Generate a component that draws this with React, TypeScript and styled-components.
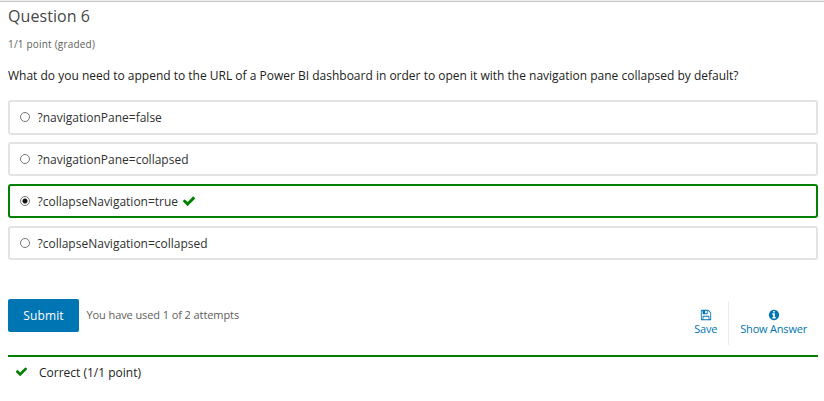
import React from 'react';
import styled, { createGlobalStyle } from 'styled-components';

const GlobalStyle = createGlobalStyle`
  * { box-sizing: border-box; }
  body {
    margin: 0;
    background: #fff;
    color: #222;
    font-family: "Open Sans", sans-serif;
    font-size: 12px;
  }
`;

const Problem = styled.main`
  height: 401px;
  padding: 0 6px 0 8px;
  border-top: 1px solid #ececec;
  box-shadow: inset 0 1px 0 #c8c8c8;
  overflow: hidden;
`;

const Title = styled.h3`
  margin: 0;
  padding-top: 5px;
  font-size: 16px;
  line-height: 20px;
  font-weight: 400;
  letter-spacing: 0.07px;
  color: #474747;
`;

const Progress = styled.div`
  margin-top: 11px;
  font-size: 10px;
  line-height: 14px;
  letter-spacing: 0.2px;
  color: #5e5e5e;
`;

const Prompt = styled.p`
  margin: 16px 0 15px;
  font-size: 12px;
  line-height: 18px;
  white-space: nowrap;
`;

const Choices = styled.div`
  display: flex;
  flex-direction: column;
`;

const Choice = styled.label<{ $correct?: boolean }>`
  display: flex;
  align-items: center;
  height: 34px;
  margin-bottom: 8px;
  padding-left: 10px;
  border: 2px solid ${(p) => (p.$correct ? '#008100' : '#e3e3e3')};
  border-radius: 3px;
  color: #313131;
  line-height: 18px;
  white-space: nowrap;
  &:first-child {
    height: 35px;
    margin-bottom: 7px;
    padding-bottom: 1px;
  }
`;

const ChoiceText = styled.span`
  padding-top: 2px;
`;

const Radio = styled.input`
  appearance: none;
  width: 10px;
  height: 10px;
  margin: 0 7.5px 0 0;
  border: 1px solid #777;
  border-radius: 50%;
  background: #fff;
  &:checked {
    background: radial-gradient(circle, #111 0 2px, #fff 3px);
  }
`;

const Icon = styled.svg<{ $size: number }>`
  display: block;
  flex: none;
  width: ${(p) => p.$size}px;
  height: ${(p) => p.$size}px;
  fill: currentColor;
`;

const Mark = styled.span`
  margin-left: 4px;
  color: #008100;
`;

const Actions = styled.div`
  display: flex;
  align-items: flex-start;
  height: 56px;
  margin-top: 31px;
`;

const Submit = styled.button`
  width: 71px;
  height: 33px;
  padding: 0;
  border: 0;
  border-radius: 2px;
  background: #0075b4;
  color: #fff;
  font: 400 12px/33px "Open Sans", sans-serif;
  letter-spacing: 0.1px;
`;

const Attempts = styled.span`
  margin-left: 7.5px;
  font-size: 11px;
  line-height: 32px;
  letter-spacing: -0.09px;
  color: #5e5e5e;
`;

const Tools = styled.div`
  display: flex;
  margin: 3px 0 0 auto;
`;

const Tool = styled.button`
  display: flex;
  flex-direction: column;
  align-items: center;
  height: 43px;
  padding: 7px 11px 0;
  border: 0;
  background: transparent;
  color: #0075b4;
  font: 400 11px/14px "Open Sans", sans-serif;
  letter-spacing: -0.2px;
  & + & { border-left: 1px solid #ececec; }
`;

const ToolLabel = styled.span`
  margin-top: 1px;
`;

const Result = styled.div`
  display: flex;
  align-items: center;
  height: 32px;
  padding-left: 7px;
  border-top: 2px solid #008100;
`;

const ResultIcon = styled.span`
  margin: 0 11px 2px 0;
  color: #008100;
`;

const CHECK =
  'M1671 566q0 40-28 68l-724 724-136 136q-28 28-68 28t-68-28l-136-136-362-362q-28-28-28-68t28-68l136-136q28-28 68-28t68 28l294 295 656-657q28-28 68-28t68 28l136 136q28 28 28 68z';
const FLOPPY =
  'M512 1536h768v-384h-768v384zm896 0h128v-896q0-14-10-38.5t-20-34.5l-281-281q-10-10-34-20t-39-10v416q0 40-28 68t-68 28h-576q-40 0-68-28t-28-68v-416h-128v1280h128v-416q0-40 28-68t68-28h832q40 0 68 28t28 68v416zm-384-928v-320q0-13-9.5-22.5t-22.5-9.5h-192q-13 0-22.5 9.5t-9.5 22.5v320q0 13 9.5 22.5t22.5 9.5h192q13 0 22.5-9.5t9.5-22.5zm640 32v928q0 40-28 68t-68 28h-1344q-40 0-68-28t-28-68v-1344q0-40 28-68t68-28h928q40 0 88 20t76 48l280 280q28 28 48 76t20 88z';
const INFO =
  'M1152 1376v-160q0-14-9-23t-23-9h-96v-512q0-14-9-23t-23-9h-320q-14 0-23 9t-9 23v160q0 14 9 23t23 9h96v320h-96q-14 0-23 9t-9 23v160q0 14 9 23t23 9h448q14 0 23-9t9-23zm-128-896v-160q0-14-9-23t-23-9h-192q-14 0-23 9t-9 23v160q0 14 9 23t23 9h192q14 0 23-9t9-23zm640 416q0 209-103 385.5t-279.5 279.5-385.5 103-385.5-103-279.5-279.5-103-385.5 103-385.5 279.5-279.5 385.5-103 385.5 103 279.5 279.5 103 385.5z';

function Glyph({ d, size }: { d: string; size: number }) {
  return (
    <Icon $size={size} viewBox="0 0 1792 1792" aria-hidden="true">
      <path d={d} />
    </Icon>
  );
}

const options = [
  { text: '?navigationPane=false', correct: false },
  { text: '?navigationPane=collapsed', correct: false },
  { text: '?collapseNavigation=true', correct: true },
  { text: '?collapseNavigation=collapsed', correct: false },
];

export default function App() {
  return (
    <>
      <GlobalStyle />
      <Problem>
        <Title>Question 6</Title>
        <Progress>1/1 point (graded)</Progress>
        <Prompt>
          What do you need to append to the URL of a Power BI dashboard in order to open it with the
          navigation pane collapsed by default?
        </Prompt>
        <Choices>
          {options.map((o) => (
            <Choice key={o.text} $correct={o.correct}>
              <Radio type="radio" name="answer" defaultChecked={o.correct} />
              <ChoiceText>{o.text}</ChoiceText>
              {o.correct && (
                <Mark>
                  <Glyph d={CHECK} size={14} />
                </Mark>
              )}
            </Choice>
          ))}
        </Choices>
        <Actions>
          <Submit type="button">Submit</Submit>
          <Attempts>You have used 1 of 2 attempts</Attempts>
          <Tools>
            <Tool type="button">
              <Glyph d={FLOPPY} size={12} />
              <ToolLabel>Save</ToolLabel>
            </Tool>
            <Tool type="button">
              <Glyph d={INFO} size={12} />
              <ToolLabel>Show Answer</ToolLabel>
            </Tool>
          </Tools>
        </Actions>
        <Result>
          <ResultIcon>
            <Glyph d={CHECK} size={13} />
          </ResultIcon>
          <span>Correct (1/1 point)</span>
        </Result>
      </Problem>
    </>
  );
}
